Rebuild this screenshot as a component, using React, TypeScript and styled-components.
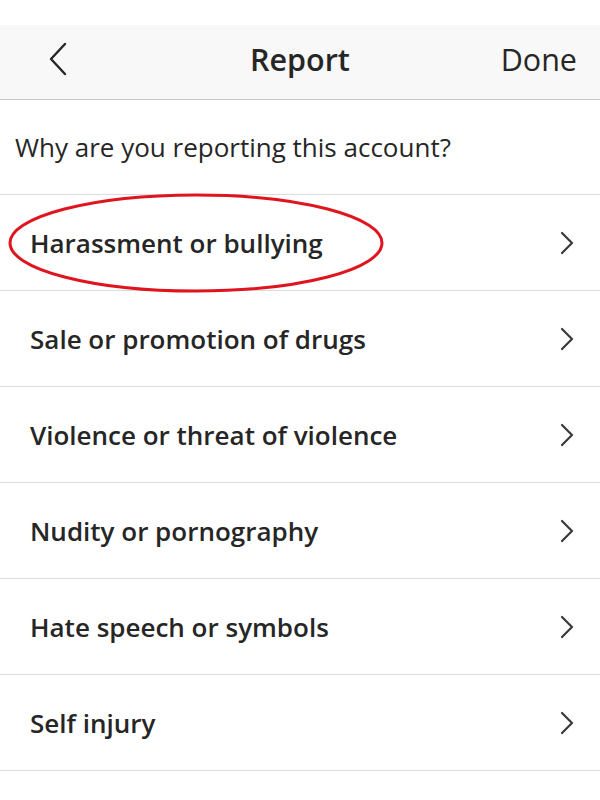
import React from 'react';
import styled, { createGlobalStyle } from 'styled-components';

const GlobalStyle = createGlobalStyle`
  body {
    margin: 0;
    background: #ffffff;
    font-family: "Open Sans", Roboto, "Liberation Sans", sans-serif;
    color: #262626;
  }
`;

const reasons = [
  'Harassment or bullying',
  'Sale or promotion of drugs',
  'Violence or threat of violence',
  'Nudity or pornography',
  'Hate speech or symbols',
  'Self injury',
];

const Screen = styled.div`
  width: 600px;
  height: 800px;
  overflow: hidden;
  padding-top: 25px;
  box-sizing: border-box;
`;

const Header = styled.header`
  height: 75px;
  padding-bottom: 6px;
  background: #f8f8f8;
  border-bottom: 1px solid #c4c4c4;
  display: grid;
  grid-template-columns: 120px 1fr 120px;
  align-items: center;
  box-sizing: border-box;
`;

const BackButton = styled.button`
  border: none;
  background: none;
  padding: 0 0 0 48px;
  display: flex;
  align-items: center;
  color: #262626;
  height: 100%;
`;

const Title = styled.h1`
  margin: 0;
  text-align: center;
  font-size: 30.5px;
  font-weight: 600;
  color: #262626;
`;

const DoneButton = styled.button`
  border: none;
  background: none;
  font-family: inherit;
  font-size: 30.5px;
  color: #262626;
  text-align: right;
  padding: 0 23px 0 0;
`;

const Question = styled.p`
  margin: 0;
  height: 94px;
  display: flex;
  align-items: center;
  padding-left: 15px;
  font-size: 26px;
  color: #262626;
  border-bottom: 1px solid #dcdcdc;
`;

const List = styled.ul`
  list-style: none;
  margin: 0;
  padding: 0;
`;

const Row = styled.li`
  position: relative;
  height: 96px;
  box-sizing: border-box;
  border-bottom: 1px solid #dcdcdc;
  display: flex;
  align-items: center;
  justify-content: space-between;
  padding: 0 26px 0 30px;
`;

const Label = styled.span`
  font-size: 26px;
  font-weight: 600;
  color: #262626;
`;

const Circle = styled.svg`
  position: absolute;
  left: 8px;
  top: -2px;
  pointer-events: none;
`;

const Chevron = ({ dir }: { dir: 'left' | 'right' }) =>
  dir === 'right' ? (
    <svg width="14" height="24" viewBox="0 0 14 24" fill="none">
      <path d="M2 2 L12 12 L2 22" stroke="#3a3a3a" strokeWidth="2.2" strokeLinecap="round" strokeLinejoin="round" />
    </svg>
  ) : (
    <svg width="20" height="34" viewBox="0 0 20 34" fill="none">
      <path d="M17 2 L3 17 L17 32" stroke="#262626" strokeWidth="2.4" strokeLinecap="round" strokeLinejoin="round" />
    </svg>
  );

export default function App() {
  return (
    <Screen>
      <GlobalStyle />
      <Header>
        <BackButton aria-label="Back">
          <Chevron dir="left" />
        </BackButton>
        <Title>Report</Title>
        <DoneButton>Done</DoneButton>
      </Header>
      <Question>Why are you reporting this account?</Question>
      <List>
        {reasons.map((r, i) => (
          <Row key={r}>
            <Label>{r}</Label>
            <Chevron dir="right" />
            {i === 0 && (
              <Circle width="380" height="102" viewBox="0 0 380 102">
                <ellipse cx="188" cy="50" rx="186" ry="48" fill="none" stroke="#e0141e" strokeWidth="3" />
              </Circle>
            )}
          </Row>
        ))}
      </List>
    </Screen>
  );
}
